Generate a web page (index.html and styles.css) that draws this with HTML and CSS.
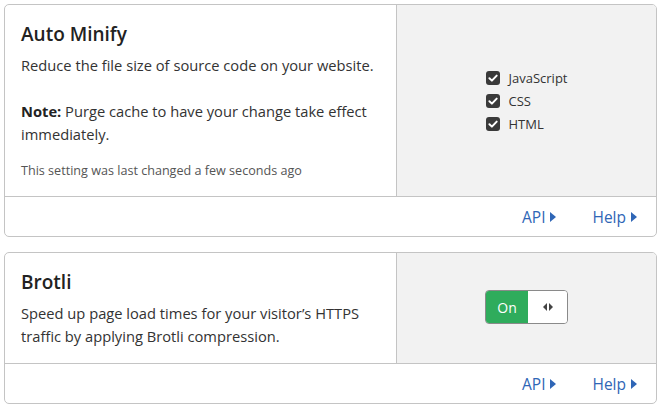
FILE: index.html
```html
<!DOCTYPE html>
<html lang="en">
<head>
  <meta charset="UTF-8" />
  <title>Speed settings</title>
  <link rel="stylesheet" href="styles.css">
</head>
<body>

  <div class="card">
    <div class="card-body">
      <div class="card-main">
        <h3 class="card-title">Auto Minify</h3>
        <p class="card-text">Reduce the file size of source code on your website.</p>
        <p class="card-text note"><strong>Note:</strong> Purge cache to have your change take effect immediately.</p>
        <p class="card-meta">This setting was last changed a few seconds ago</p>
      </div>
      <div class="card-side">
        <div class="checks">
          <label class="check">
            <svg class="check-box" width="14" height="14" viewBox="0 0 14 14"><rect x="0" y="0" width="14" height="14" rx="3" fill="#3a3a3a"/><path d="M3.4 7.2 L5.9 9.6 L10.7 4.6" fill="none" stroke="#fff" stroke-width="2" stroke-linecap="round" stroke-linejoin="round"/></svg>
            JavaScript
          </label>
          <label class="check">
            <svg class="check-box" width="14" height="14" viewBox="0 0 14 14"><rect x="0" y="0" width="14" height="14" rx="3" fill="#3a3a3a"/><path d="M3.4 7.2 L5.9 9.6 L10.7 4.6" fill="none" stroke="#fff" stroke-width="2" stroke-linecap="round" stroke-linejoin="round"/></svg>
            CSS
          </label>
          <label class="check">
            <svg class="check-box" width="14" height="14" viewBox="0 0 14 14"><rect x="0" y="0" width="14" height="14" rx="3" fill="#3a3a3a"/><path d="M3.4 7.2 L5.9 9.6 L10.7 4.6" fill="none" stroke="#fff" stroke-width="2" stroke-linecap="round" stroke-linejoin="round"/></svg>
            HTML
          </label>
        </div>
      </div>
    </div>
    <div class="card-footer">
      <a href="#" class="footer-link">API <svg class="caret" width="6" height="10" viewBox="0 0 6 10"><path d="M0 0 L6 5 L0 10 Z" fill="#2f66b6"/></svg></a>
      <a href="#" class="footer-link">Help <svg class="caret" width="6" height="10" viewBox="0 0 6 10"><path d="M0 0 L6 5 L0 10 Z" fill="#2f66b6"/></svg></a>
    </div>
  </div>

  <div class="card">
    <div class="card-body">
      <div class="card-main short">
        <h3 class="card-title">Brotli</h3>
        <p class="card-text">Speed up page load times for your visitor’s HTTPS traffic by applying Brotli compression.</p>
      </div>
      <div class="card-side">
        <div class="toggle">
          <span class="toggle-on">On</span>
          <span class="toggle-handle">
            <svg width="10" height="8" viewBox="0 0 10 8"><path d="M4 0 L0 4 L4 8 Z M6 0 L10 4 L6 8 Z" fill="#444"/></svg>
          </span>
        </div>
      </div>
    </div>
    <div class="card-footer">
      <a href="#" class="footer-link">API <svg class="caret" width="6" height="10" viewBox="0 0 6 10"><path d="M0 0 L6 5 L0 10 Z" fill="#2f66b6"/></svg></a>
      <a href="#" class="footer-link">Help <svg class="caret" width="6" height="10" viewBox="0 0 6 10"><path d="M0 0 L6 5 L0 10 Z" fill="#2f66b6"/></svg></a>
    </div>
  </div>

</body>
</html>
```

FILE: styles.css
```css
* {
  margin: 0;
  padding: 0;
  box-sizing: border-box;
}

body {
  margin: 4px 3px 0 4px;
  font-family: "Open Sans", "Noto Sans", sans-serif;
  color: #333;
  background: #fff;
}

.card {
  border: 1px solid #c4c4c4;
  border-radius: 5px;
  margin-bottom: 15px;
  overflow: hidden;
}

.card-body {
  display: flex;
  border-bottom: 1px solid #c4c4c4;
}

.card-main {
  flex: 1;
  padding: 17px 16px 16px 16px;
}

.card-main.short {
  padding-bottom: 15px;
}

.card-title {
  font-size: 19px;
  font-weight: 600;
  line-height: 24px;
  color: #222;
  margin-bottom: 8px;
}

.card-text {
  font-size: 14.7px;
  line-height: 23px;
}

.card-text.note {
  margin-top: 23px;
}

.card-text strong {
  font-weight: 700;
  color: #222;
}

.card-meta {
  margin-top: 16px;
  font-size: 12.6px;
  line-height: 18px;
  color: #555;
}

.card-side {
  width: 260px;
  flex-shrink: 0;
  background: #f2f2f2;
  border-left: 1px solid #c4c4c4;
  display: flex;
  align-items: center;
  justify-content: center;
}

.checks {
  display: flex;
  flex-direction: column;
  gap: 9px;
}

.check {
  display: flex;
  align-items: center;
  gap: 9px;
  font-size: 13px;
  line-height: 14px;
  color: #333;
}

.toggle {
  display: flex;
  height: 34px;
  border: 1px solid #8a8a8a;
  border-radius: 4px;
  overflow: hidden;
  margin-bottom: 2px;
}

.toggle-on {
  width: 42px;
  background: #2fac5c;
  color: #fff;
  font-size: 14px;
  display: flex;
  align-items: center;
  justify-content: center;
}

.toggle-handle {
  width: 39px;
  background: #fff;
  display: flex;
  align-items: center;
  justify-content: center;
}

.card-footer {
  height: 39px;
  display: flex;
  justify-content: flex-end;
  align-items: center;
  gap: 36px;
  padding-right: 19px;
}

.footer-link {
  color: #2f66b6;
  text-decoration: none;
  font-size: 15.5px;
  display: flex;
  align-items: center;
  gap: 5px;
}
```
